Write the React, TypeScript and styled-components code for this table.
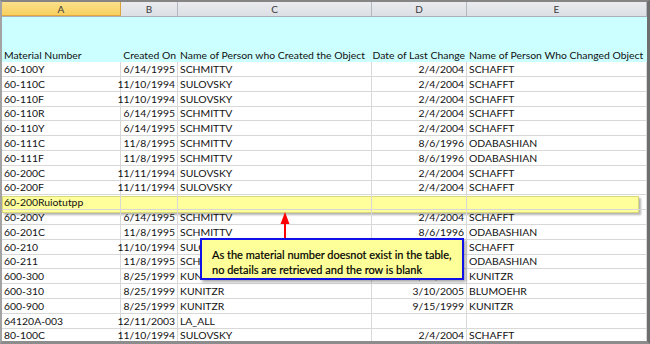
import React from 'react';
import styled, { createGlobalStyle } from 'styled-components';

const GlobalStyle = createGlobalStyle`
  html, body {
    margin: 0;
    padding: 0;
    background: #ffffff;
    overflow: hidden;
  }
`;

const COLUMNS = '119px 57px 194px 95px 1fr';
const ROW_HEIGHT = 14.8;

type Align = 'left' | 'right' | 'center';

interface SheetRow {
  material: string;
  created: string;
  createdBy: string;
  changed: string;
  changedBy: string;
}

const rows: SheetRow[] = [
  { material: '60-100Y', created: '6/14/1995', createdBy: 'SCHMITTV', changed: '2/4/2004', changedBy: 'SCHAFFT' },
  { material: '60-110C', created: '11/10/1994', createdBy: 'SULOVSKY', changed: '2/4/2004', changedBy: 'SCHAFFT' },
  { material: '60-110F', created: '11/10/1994', createdBy: 'SULOVSKY', changed: '2/4/2004', changedBy: 'SCHAFFT' },
  { material: '60-110R', created: '6/14/1995', createdBy: 'SCHMITTV', changed: '2/4/2004', changedBy: 'SCHAFFT' },
  { material: '60-110Y', created: '6/14/1995', createdBy: 'SCHMITTV', changed: '2/4/2004', changedBy: 'SCHAFFT' },
  { material: '60-111C', created: '11/8/1995', createdBy: 'SCHMITTV', changed: '8/6/1996', changedBy: 'ODABASHIAN' },
  { material: '60-111F', created: '11/8/1995', createdBy: 'SCHMITTV', changed: '8/6/1996', changedBy: 'ODABASHIAN' },
  { material: '60-200C', created: '11/11/1994', createdBy: 'SULOVSKY', changed: '2/4/2004', changedBy: 'SCHAFFT' },
  { material: '60-200F', created: '11/11/1994', createdBy: 'SULOVSKY', changed: '2/4/2004', changedBy: 'SCHAFFT' },
  { material: '60-200Ruiotutpp', created: '', createdBy: '', changed: '', changedBy: '' },
  { material: '60-200Y', created: '6/14/1995', createdBy: 'SCHMITTV', changed: '2/4/2004', changedBy: 'SCHAFFT' },
  { material: '60-201C', created: '11/8/1995', createdBy: 'SCHMITTV', changed: '8/6/1996', changedBy: 'ODABASHIAN' },
  { material: '60-210', created: '11/10/1994', createdBy: 'SULOVSKY', changed: '2/4/2004', changedBy: 'SCHAFFT' },
  { material: '60-211', created: '11/8/1995', createdBy: 'SCHMITTV', changed: '8/6/1996', changedBy: 'ODABASHIAN' },
  { material: '600-300', created: '8/25/1999', createdBy: 'KUNITZR', changed: '8/25/1999', changedBy: 'KUNITZR' },
  { material: '600-310', created: '8/25/1999', createdBy: 'KUNITZR', changed: '3/10/2005', changedBy: 'BLUMOEHR' },
  { material: '600-900', created: '8/25/1999', createdBy: 'KUNITZR', changed: '9/15/1999', changedBy: 'KUNITZR' },
  { material: '64120A-003', created: '12/11/2003', createdBy: 'LA_ALL', changed: '', changedBy: '' },
  { material: '80-100C', created: '11/10/1994', createdBy: 'SULOVSKY', changed: '2/4/2004', changedBy: 'SCHAFFT' },
];

const Frame = styled.div`
  position: relative;
  width: 650px;
  height: 344px;
  box-sizing: border-box;
  border-top: 2px solid #858585;
  border-left: 2px solid #a3a3a3;
  border-right: 3px solid #6e6e6e;
  border-bottom: 3px solid #8c8c8c;
  overflow: hidden;
  font-family: Lato, 'Liberation Sans', sans-serif;
  font-size: 10.4px;
  color: #111111;
  background: #ffffff;
`;

const HeaderBar = styled.div`
  display: grid;
  grid-template-columns: ${COLUMNS};
  height: 15px;
  box-sizing: border-box;
  border-bottom: 1px solid #a9b0ba;
`;

const ColumnLetter = styled.div<{ $selected?: boolean }>`
  display: flex;
  align-items: center;
  justify-content: center;
  box-sizing: border-box;
  border-right: 1px solid ${(p) => (p.$selected ? '#d9a53a' : '#b3b8c0')};
  background: ${(p) =>
    p.$selected
      ? 'linear-gradient(#fbe08a, #f7cf5c)'
      : 'linear-gradient(#e9ebee, #dcdfe4)'};
  box-shadow: ${(p) => (p.$selected ? 'inset 0 -1px 0 #e2a93c' : 'none')};
  color: #3a3a3a;
  font-size: 10px;
`;

const TitleRow = styled.div`
  display: grid;
  grid-template-columns: ${COLUMNS};
  height: 45px;
  background: #ccffff;
`;

const Row = styled.div`
  position: relative;
  display: grid;
  grid-template-columns: ${COLUMNS};
  height: ${ROW_HEIGHT}px;
`;

const Cell = styled.div<{ $align?: Align; $grid?: boolean }>`
  display: flex;
  align-items: flex-end;
  justify-content: ${(p) =>
    p.$align === 'right' ? 'flex-end' : p.$align === 'center' ? 'center' : 'flex-start'};
  box-sizing: border-box;
  padding: 0 2px 0 2px;
  line-height: 14px;
  white-space: nowrap;
  overflow: visible;
  border-right: ${(p) => (p.$grid ? '1px solid #d8d8d8' : 'none')};
  border-bottom: ${(p) => (p.$grid ? '1px solid #d8d8d8' : 'none')};
`;

const Highlight = styled.div`
  position: absolute;
  left: 0;
  top: 194px;
  width: 637px;
  height: 17px;
  box-sizing: border-box;
  background: #ffff9c;
  border: 1px solid #d9d97a;
  box-shadow: 2px 2px 2px rgba(0, 0, 0, 0.3);
`;

const Arrow = styled.svg`
  position: absolute;
  left: 277px;
  top: 209px;
`;

const Callout = styled.div`
  position: absolute;
  left: 198px;
  top: 236px;
  width: 264px;
  height: 42px;
  box-sizing: border-box;
  padding: 7px 0 0 10px;
  background: #ffff99;
  border: 2px solid #1010e8;
  box-shadow: 2px 2px 3px rgba(0, 0, 0, 0.35);
  font-size: 11px;
  line-height: 15px;
  color: #000000;
  -webkit-text-stroke: 0.2px #000000;
`;

const letters = ['A', 'B', 'C', 'D', 'E'];

export default function App() {
  return (
    <>
      <GlobalStyle />
      <Frame>
        <Highlight />
        <HeaderBar>
          {letters.map((l) => (
            <ColumnLetter key={l} $selected={l === 'A'}>
              {l}
            </ColumnLetter>
          ))}
        </HeaderBar>
        <TitleRow>
          <Cell>Material Number</Cell>
          <Cell $align="right">Created On</Cell>
          <Cell>Name of Person who Created the Object</Cell>
          <Cell $align="right">Date of Last Change</Cell>
          <Cell>Name of Person Who Changed Object</Cell>
        </TitleRow>
        {rows.map((r) => (
          <Row key={r.material}>
            <Cell $grid>{r.material}</Cell>
            <Cell $grid $align="right">{r.created}</Cell>
            <Cell $grid>{r.createdBy}</Cell>
            <Cell $grid $align="right">{r.changed}</Cell>
            <Cell $grid>{r.changedBy}</Cell>
          </Row>
        ))}

        <Arrow width="12" height="30" viewBox="0 0 12 30">
          <path d="M6 1 L10.5 13 L7 13 L7 29 L5 29 L5 13 L1.5 13 Z" fill="#ff0000" />
        </Arrow>
        <Callout>
          As the material number doesnot exist in the table,
          <br />
          no details are retrieved and the row is blank
        </Callout>
      </Frame>
    </>
  );
}
